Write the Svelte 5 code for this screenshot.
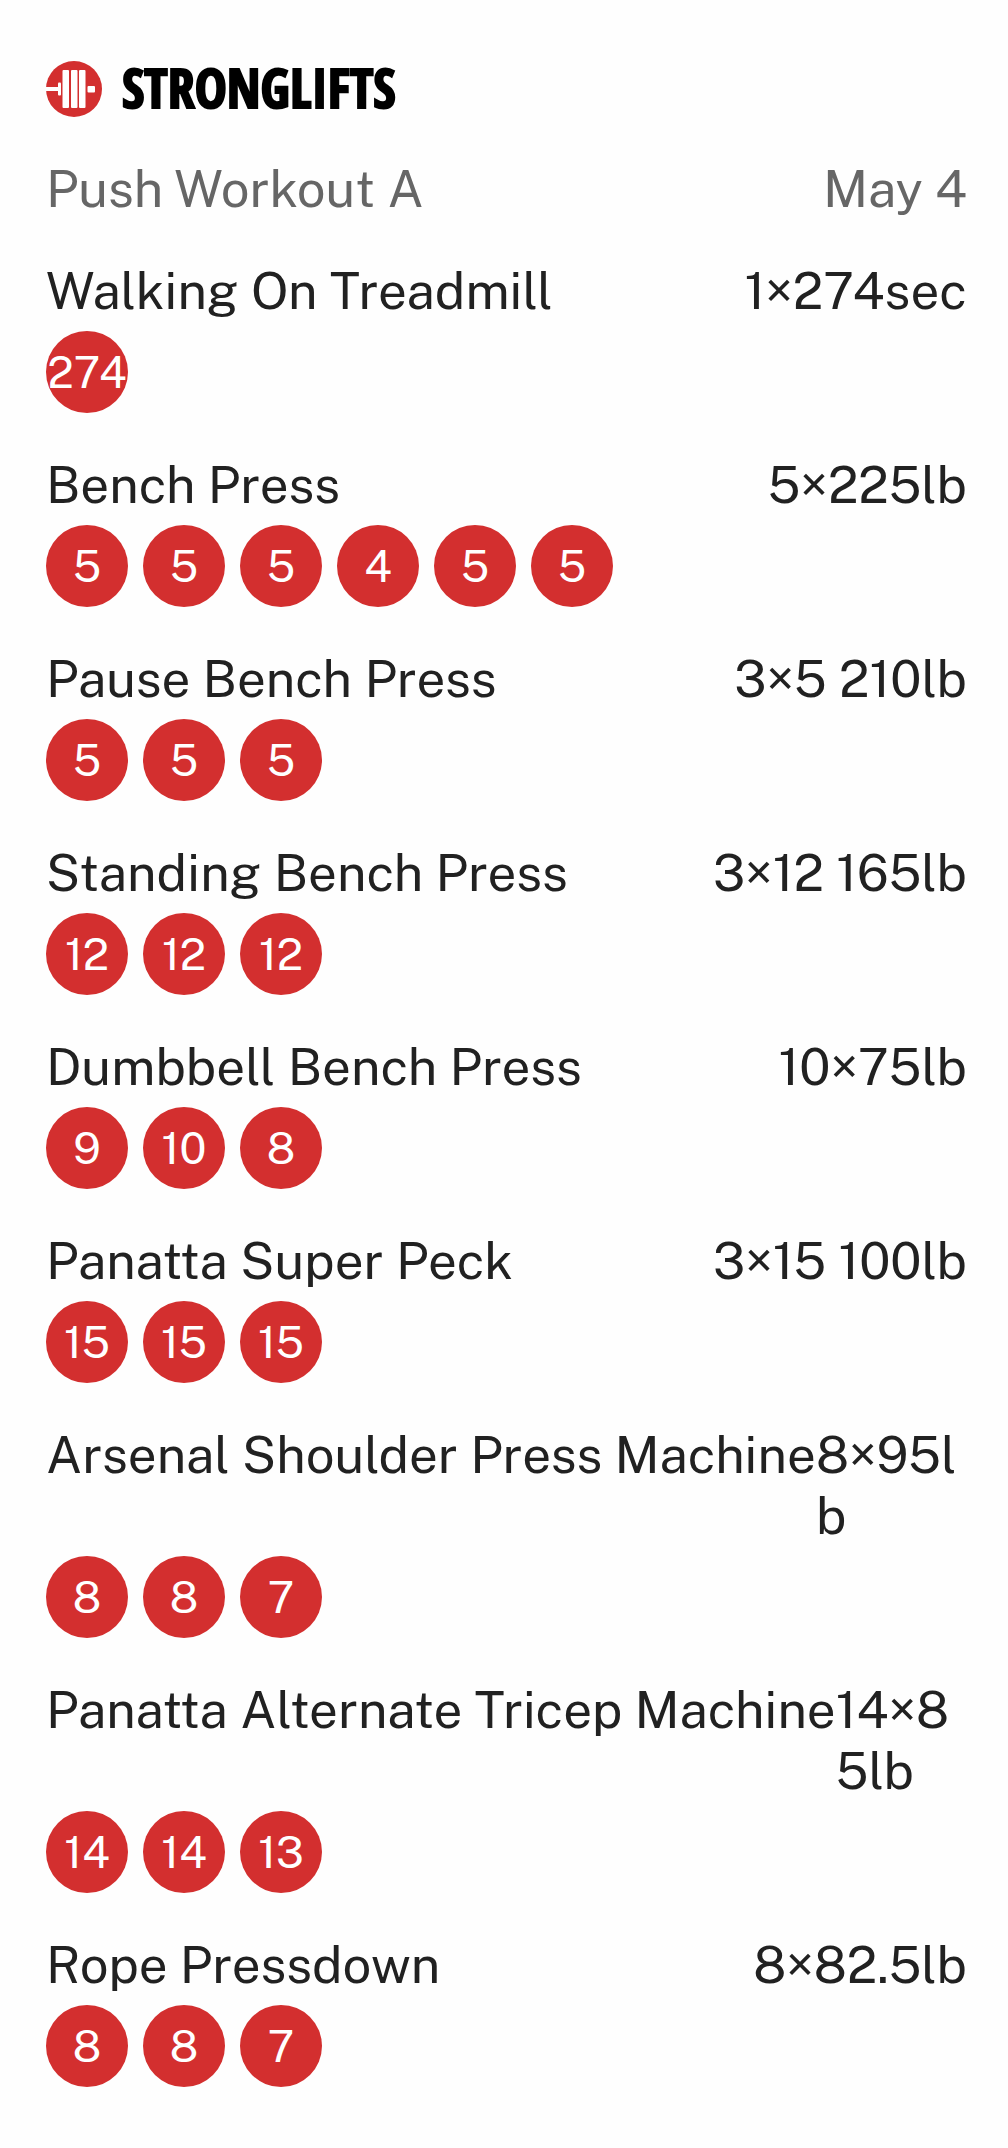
<script lang="ts">
	type Exercise = {
		name: string;
		load: string;
		reps: number[];
	};

	const workout = { title: 'Push Workout A', date: 'May 4' };

	const exercises: Exercise[] = [
		{ name: 'Walking On Treadmill', load: '1×274sec', reps: [274] },
		{ name: 'Bench Press', load: '5×225lb', reps: [5, 5, 5, 4, 5, 5] },
		{ name: 'Pause Bench Press', load: '3×5 210lb', reps: [5, 5, 5] },
		{ name: 'Standing Bench Press', load: '3×12 165lb', reps: [12, 12, 12] },
		{ name: 'Dumbbell Bench Press', load: '10×75lb', reps: [9, 10, 8] },
		{ name: 'Panatta Super Peck', load: '3×15 100lb', reps: [15, 15, 15] },
		{ name: 'Arsenal Shoulder Press Machine', load: '8×95lb', reps: [8, 8, 7] },
		{ name: 'Panatta Alternate Tricep Machine', load: '14×85lb', reps: [14, 14, 13] },
		{ name: 'Rope Pressdown', load: '8×82.5lb', reps: [8, 8, 7] }
	];
</script>

<main class="workout">
	<header class="brand">
		<svg class="brand-icon" viewBox="0 0 56 56" aria-hidden="true">
			<circle cx="28" cy="28" r="28" fill="#d32f2f" />
			<g fill="#fff">
				<rect x="0" y="26" width="13" height="4" />
				<rect x="12" y="21.5" width="3" height="13" rx="1" />
				<rect x="16.5" y="9" width="6.5" height="38" rx="1" />
				<rect x="25" y="9" width="6.5" height="38" rx="1" />
				<rect x="33" y="9" width="6.5" height="38" rx="1" />
				<rect x="41.5" y="25" width="7.5" height="6.5" rx="1" />
			</g>
		</svg>
		<span class="brand-name">STRONGLIFTS</span>
	</header>

	<div class="row summary">
		<h1>{workout.title}</h1>
		<span>{workout.date}</span>
	</div>

	{#each exercises as exercise}
		<section class="exercise">
			<div class="row">
				<h2>{exercise.name}</h2>
				<span class="load">{exercise.load}</span>
			</div>
			<ul class="sets">
				{#each exercise.reps as rep}
					<li>{rep}</li>
				{/each}
			</ul>
		</section>
	{/each}
</main>

<style>
	:global(body) {
		margin: 0;
		background: #fefefe;
	}

	.workout {
		display: flex;
		flex-direction: column;
		gap: 41px;
		padding: 61px 41px 61px 46px;
		color: #212121;
		font-family: 'Public Sans', 'Libre Franklin', 'Open Sans', sans-serif;
		font-size: 51px;
		line-height: 61px;
	}

	.brand {
		display: flex;
		align-items: flex-start;
		gap: 20px;
		height: 56px;
	}

	.brand-icon {
		width: 56px;
		height: 56px;
	}

	.brand-name {
		color: #000;
		font-family: 'Open Sans Condensed', 'Roboto Condensed', sans-serif;
		font-size: 54px;
		font-weight: 800;
		line-height: 52px;
		-webkit-text-stroke: 2px #000;
	}

	.row {
		display: flex;
		justify-content: space-between;
	}

	.summary {
		color: #666;
	}

	h1,
	h2 {
		flex: none;
		margin: 0;
		font-size: inherit;
		font-weight: 400;
	}

	.load {
		word-break: break-all;
	}

	/* Completed sets */
	.sets {
		display: flex;
		gap: 15px;
		margin: 10px 0 0;
		padding: 0;
		list-style: none;
	}

	.sets li {
		display: flex;
		align-items: center;
		justify-content: center;
		width: 82px;
		height: 82px;
		border-radius: 50%;
		background: #d32f2f;
		color: #fff;
		font-size: 44px;
	}
</style>
